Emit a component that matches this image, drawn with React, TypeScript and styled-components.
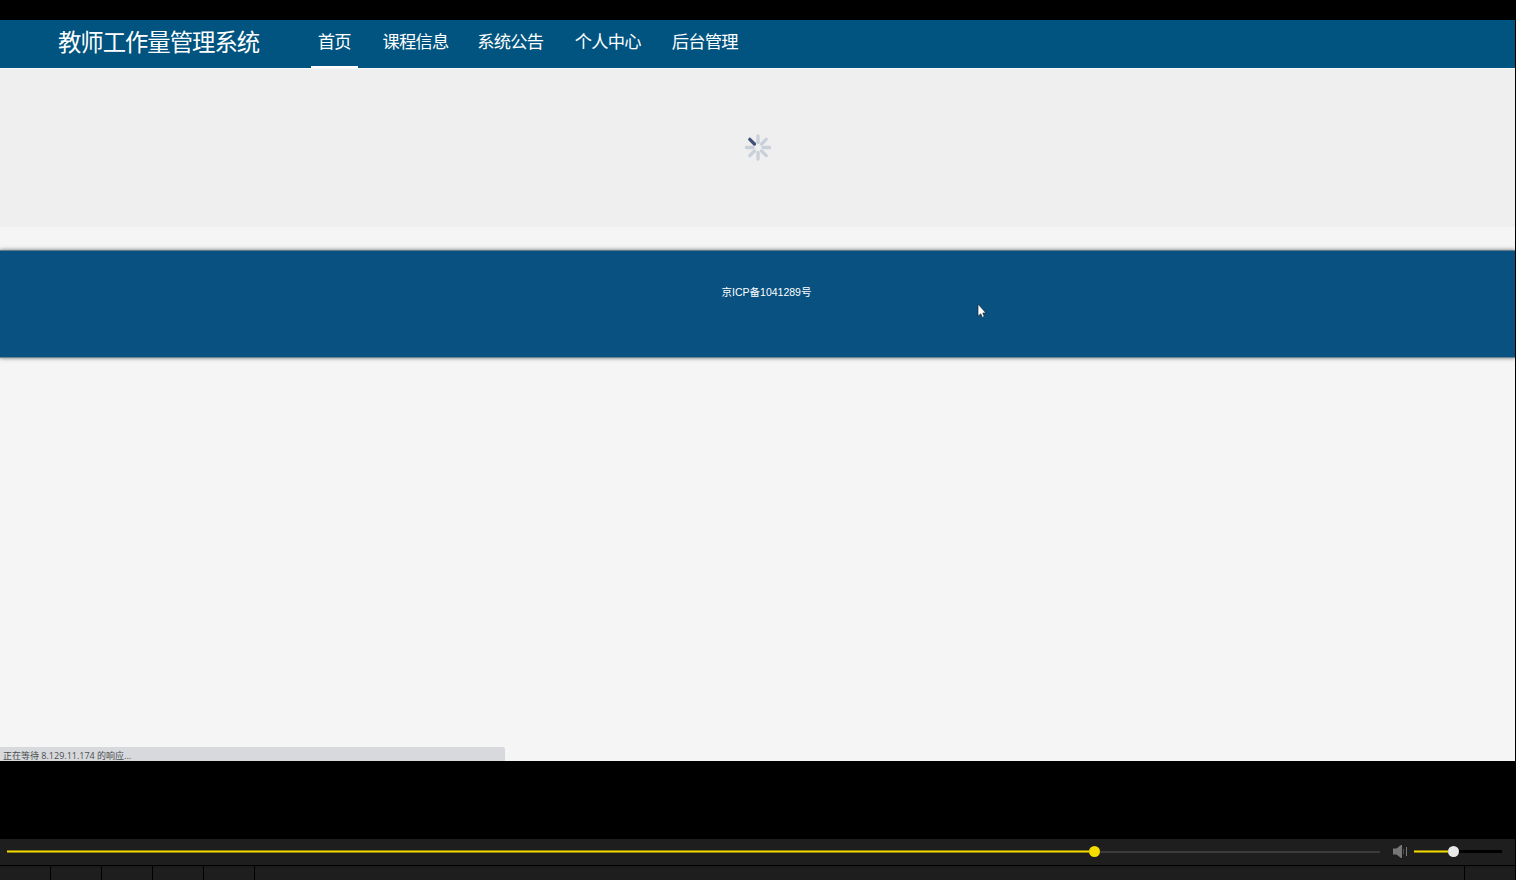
import React from "react";
import styled, { createGlobalStyle } from "styled-components";

const GlobalStyle = createGlobalStyle`
  * { box-sizing: border-box; }
  body { margin: 0; background: #000; overflow: hidden; }
`;

const Player = styled.div`
  width: 1515px;
  height: 880px;
  padding-top: 20px;
  display: flex;
  flex-direction: column;
  background: #000;
  font-family: "Noto Sans CJK SC", sans-serif;
`;

const Screen = styled.div`
  position: relative;
  height: 741px;
  display: flex;
  flex-direction: column;
  background: #f5f5f5;
  overflow: hidden;
`;

const Header = styled.header`
  height: 48px;
  flex: none;
  display: flex;
  padding-left: 58px;
  background: #00547f;
  color: #fff;
`;

const Title = styled.h1`
  margin: 0;
  width: 253px;
  font-size: 23.4px;
  letter-spacing: -1.05px;
  font-weight: 400;
  line-height: 43px;
  white-space: nowrap;
`;

const Nav = styled.nav`
  display: flex;
`;

const NavItem = styled.a<{ $active?: boolean; $gap: number }>`
  height: 48px;
  padding: 0 7.3px 0 6.7px;
  margin-right: ${(p) => p.$gap}px;
  font-size: 17.3px;
  letter-spacing: -0.8px;
  font-weight: 400;
  line-height: 41px;
  white-space: nowrap;
  border-bottom: 2px solid ${(p) => (p.$active ? "#fff" : "transparent")};
`;

const Loading = styled.section`
  height: 159px;
  flex: none;
  display: flex;
  justify-content: center;
  padding: 65px 0 0 1px;
  border-top: 1px solid #f8fafa;
  background: #efefef;
`;

const Footer = styled.footer`
  height: 108px;
  flex: none;
  margin-top: 23px;
  padding: 34px 0 0 18px;
  background: #085180;
  box-shadow: 0 0 4px rgba(0, 0, 0, 0.55);
  border-top: 1px solid #5f7d8d;
  border-bottom: 1px solid #6b8694;
  color: #fff;
  text-align: center;
  font: 10.5px/15px "Liberation Sans", "Noto Sans CJK SC", sans-serif;
`;

const StatusBar = styled.div`
  position: absolute;
  left: 0;
  bottom: 0;
  width: 505px;
  height: 14px;
  padding-left: 3px;
  border-top-right-radius: 2px;
  background: #d7d9dc;
  color: #4c4e50;
  font: 9px/18px "Open Sans", "Noto Sans CJK SC", sans-serif;
  white-space: nowrap;
`;

const Pointer = styled.svg`
  position: absolute;
  left: 977px;
  top: 283px;
`;

const Controls = styled.div`
  height: 26px;
  margin-top: 78px;
  padding: 0 13px 1px 7px;
  display: flex;
  align-items: center;
  background: #1e1e1e;
`;

const Track = styled.div<{ $width: number; $rest: string; $height: number }>`
  display: flex;
  align-items: center;
  width: ${(p) => p.$width}px;
  &::after {
    content: "";
    flex: 1;
    height: ${(p) => p.$height}px;
    background: ${(p) => p.$rest};
  }
`;

const Played = styled.div<{ $width: number }>`
  width: ${(p) => p.$width}px;
  height: 3px;
  background: linear-gradient(#8d7f0b 1px, #f6dd00 1px 2px, #8d7f0b 2px);
`;

const Knob = styled.div<{ $color: string }>`
  width: 11px;
  height: 11px;
  border-radius: 50%;
  background: ${(p) => p.$color};
`;

const SpeakerIcon = styled.svg`
  flex: none;
  margin: 0 6px 0 13px;
`;

const Toolbar = styled.div`
  height: 14px;
  margin-top: 1px;
  display: flex;
  gap: 1px;
`;

const Cell = styled.div<{ $wide?: boolean }>`
  width: 50px;
  flex: ${(p) => (p.$wide ? "1" : "none")};
  background: linear-gradient(#1b1b1b, #1e1e1e 3px);
`;

const navItems = [
  { label: "首页", gap: 17.8, active: true },
  { label: "课程信息", gap: 15 },
  { label: "系统公告", gap: 17.5 },
  { label: "个人中心", gap: 17 },
  { label: "后台管理", gap: 0 },
];

const spokes = [0, 45, 90, 135, 180, 225, 270, 315];

export default function App() {
  return (
    <>
      <GlobalStyle />
      <Player>
        <Screen>
          <Header>
            <Title>教师工作量管理系统</Title>
            <Nav>
              {navItems.map((n) => (
                <NavItem key={n.label} $gap={n.gap} $active={n.active}>
                  {n.label}
                </NavItem>
              ))}
            </Nav>
          </Header>
          <Loading>
            <svg width="28" height="28" viewBox="-14 -13.5 28 28">
              {spokes.map((a) => (
                <line
                  key={a}
                  y1={-5}
                  y2={-11.6}
                  stroke={a === 315 ? "#405376" : "#c9d0d9"}
                  strokeWidth="3.3"
                  strokeLinecap="round"
                  transform={`rotate(${a})`}
                />
              ))}
            </svg>
          </Loading>
          <Footer>京ICP备1041289号</Footer>
          <StatusBar>正在等待 8.129.11.174 的响应...</StatusBar>
          <Pointer width="10" height="16" viewBox="0 0 10 16">
            <path
              d="M1 1V13.2L3.8 10.8 5.3 14.4 7.3 13.5 5.8 10H9Z"
              fill="#fff"
              stroke="#15263a"
              strokeWidth=".7"
            />
          </Pointer>
        </Screen>
        <Controls>
          <Track $width={1373} $rest="#3b3b3b" $height={2}>
            <Played $width={1082} />
            <Knob $color="#f6dd00" />
          </Track>
          <SpeakerIcon width="15" height="13" viewBox="0 0 15 13">
            <path d="M0 3.5H3.5L8 0H9V13H8L3.5 9.5H0Z" fill="#777" />
            <path d="M10.5 4V9" stroke="#4e4e4e" />
            <path d="M13.5 2V11" stroke="#777" />
          </SpeakerIcon>
          <Track $width={88} $rest="#000" $height={3}>
            <Played $width={34} />
            <Knob $color="#e9e9e9" />
          </Track>
        </Controls>
        <Toolbar>
          <Cell />
          <Cell />
          <Cell />
          <Cell />
          <Cell />
          <Cell $wide />
          <Cell />
        </Toolbar>
      </Player>
    </>
  );
}
